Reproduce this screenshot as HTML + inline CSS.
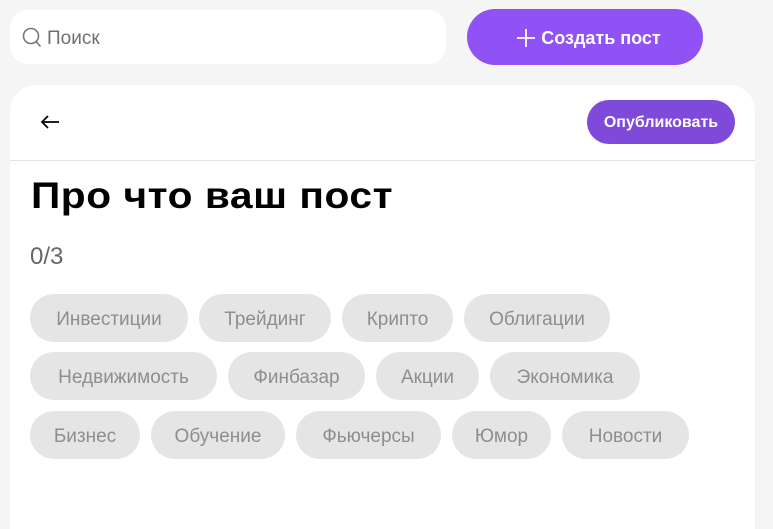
<!DOCTYPE html>
<html><head><meta charset="utf-8"><style>
*{box-sizing:border-box;margin:0;padding:0}
html,body{width:773px;height:529px;overflow:hidden}
body{background:#f5f5f5;font-family:"Liberation Sans",sans-serif;position:relative}
.search{position:absolute;left:10px;top:10px;width:436px;height:54px;background:#fff;border-radius:18px}
.search span{position:absolute;left:37px;top:18px;font-size:19px;color:#6f6f6f}
.create{position:absolute;left:467px;top:9px;width:236px;height:56px;background:#9152f5;border-radius:28px;color:#fff;font-weight:bold;font-size:18px;line-height:58px;text-align:center;padding-left:8px}
.card{position:absolute;left:10px;top:85px;width:745px;height:444px;background:#fff;border-radius:26px 26px 0 0}
.line{position:absolute;left:0;top:75px;width:745px;height:1px;background:#e3e3e3}
.pub{position:absolute;left:577px;top:15px;width:148px;height:44px;background:#7f4ad9;border-radius:22px;color:#fff;font-weight:bold;font-size:16px;line-height:45px;text-align:center}
h1{position:absolute;left:21px;top:90px;font-size:37px;font-weight:bold;color:#000;letter-spacing:0.5px;transform:scaleX(1.1);transform-origin:0 0;white-space:nowrap}
.cnt{position:absolute;left:20px;top:158px;font-size:24px;color:#666}
.chip{position:absolute;height:48px;background:#e5e5e5;border-radius:24px;color:#8e8e8e;font-size:19px;line-height:52px;text-align:center}
</style></head><body>
<div class="search">
<svg style="position:absolute;left:12px;top:17px" width="20" height="22" viewBox="0 0 20 22"><circle cx="9" cy="9" r="7.5" fill="none" stroke="#777" stroke-width="1.6"/><path d="M14 14.5 L18.5 19.5" stroke="#777" stroke-width="1.6"/></svg>
<span>Поиск</span></div>
<div class="create"><svg style="vertical-align:-3px;margin-right:6px" width="18" height="18" viewBox="0 0 18 18"><path d="M9 0V18M0 9H18" stroke="#fff" stroke-width="1.8"/></svg>Создать пост</div>
<div class="card">
<svg style="position:absolute;left:30px;top:29px" width="20" height="16" viewBox="0 0 20 16"><path d="M19 8H2M8 2L2 8L8 14" fill="none" stroke="#000" stroke-width="1.8"/></svg>
<div class="pub">Опубликовать</div>
<div class="line"></div>
<h1>Про что ваш пост</h1>
<div class="cnt">0/3</div>
<div class="chip" style="left:20px;top:209px;width:158px">Инвестиции</div>
<div class="chip" style="left:189px;top:209px;width:132px">Трейдинг</div>
<div class="chip" style="left:332px;top:209px;width:111px">Крипто</div>
<div class="chip" style="left:454px;top:209px;width:146px">Облигации</div>
<div class="chip" style="left:20px;top:267px;width:187px">Недвижимость</div>
<div class="chip" style="left:218px;top:267px;width:137px">Финбазар</div>
<div class="chip" style="left:366px;top:267px;width:103px">Акции</div>
<div class="chip" style="left:480px;top:267px;width:150px">Экономика</div>
<div class="chip" style="left:20px;top:326px;width:110px">Бизнес</div>
<div class="chip" style="left:141px;top:326px;width:134px">Обучение</div>
<div class="chip" style="left:286px;top:326px;width:145px">Фьючерсы</div>
<div class="chip" style="left:442px;top:326px;width:99px">Юмор</div>
<div class="chip" style="left:552px;top:326px;width:127px">Новости</div>
</div>
</body></html>
